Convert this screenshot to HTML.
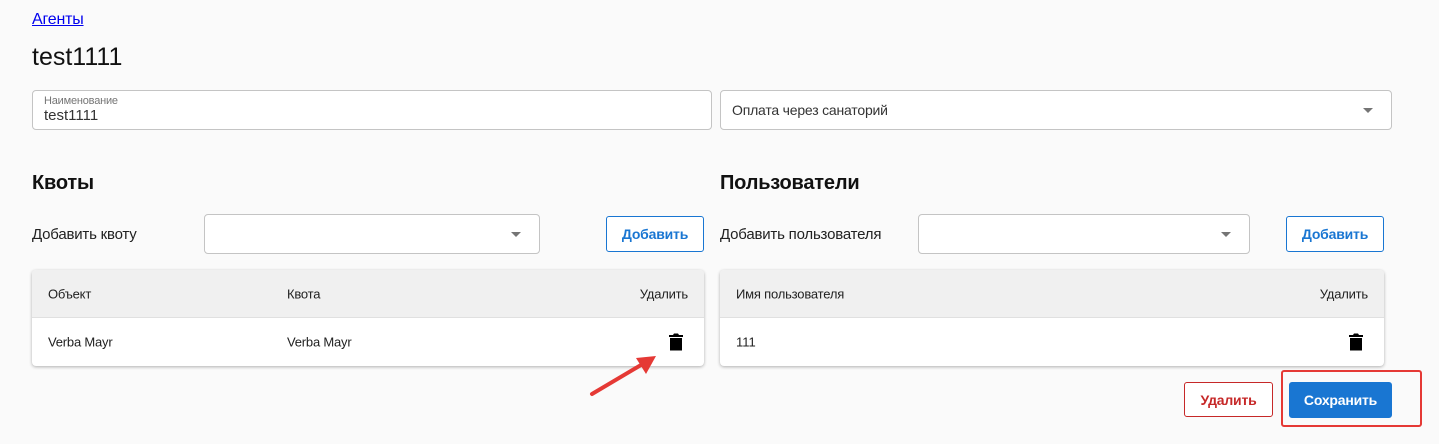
<!DOCTYPE html>
<html><head><meta charset="utf-8"><style>
*{box-sizing:border-box;margin:0;padding:0}
body{width:1439px;height:444px;background:#fafafa;font-family:"Liberation Sans",sans-serif;color:#212121;position:relative;overflow:hidden}
.a{position:absolute}
.n{letter-spacing:-0.2px}
.box{position:absolute;border:1px solid #c4c4c4;border-radius:4px;background:#fff}
.arrow{position:absolute;width:0;height:0;border-left:5px solid transparent;border-right:5px solid transparent;border-top:5px solid #757575}
.btn{position:absolute;border:1px solid #1976d2;border-radius:3px;color:#1976d2;font-size:14px;font-weight:bold;display:flex;align-items:center;justify-content:center;background:#fff}
.tbl{position:absolute;background:#fff;border-radius:4px;box-shadow:0 1px 3px rgba(0,0,0,.3);overflow:hidden}
.th{height:48px;background:#f0f0f0;border-bottom:1px solid #e0e0e0;position:relative}
.tr{height:48px;position:relative}
.c{position:absolute;font-size:13px;top:50%;transform:translateY(-50%)}
</style></head><body>
<a class="a n" style="left:32px;top:11px;font-size:16px;color:#0000ee;text-decoration:underline">Агенты</a>
<div class="a" style="left:32px;top:43px;font-size:25px;color:#111">test1111</div>
<div class="box" style="left:32px;top:90px;width:680px;height:40px">
<div class="a n" style="left:11px;top:4px;font-size:11px;color:#757575">Наименование</div>
<div class="a" style="left:11px;top:16px;font-size:15px;color:#333">test1111</div></div>
<div class="box" style="left:720px;top:90px;width:672px;height:40px">
<div class="a n" style="left:11px;top:11px;font-size:14px;color:#333">Оплата через санаторий</div>
<div class="arrow" style="left:642px;top:17px"></div></div>
<div class="a n" style="left:32px;top:172px;font-size:20px;font-weight:bold;color:#111">Квоты</div>
<div class="a n" style="left:720px;top:172px;font-size:20px;font-weight:bold;color:#111">Пользователи</div>
<div class="a n" style="left:32px;top:226px;font-size:15px">Добавить квоту</div>
<div class="box" style="left:204px;top:214px;width:336px;height:40px"><div class="arrow" style="left:306px;top:17px"></div></div>
<div class="btn n" style="left:606px;top:216px;width:98px;height:36px">Добавить</div>
<div class="a n" style="left:720px;top:226px;font-size:15px">Добавить пользователя</div>
<div class="box" style="left:918px;top:214px;width:332px;height:40px"><div class="arrow" style="left:302px;top:17px"></div></div>
<div class="btn n" style="left:1286px;top:216px;width:98px;height:36px">Добавить</div>

<div class="tbl" style="left:32px;top:270px;width:672px;height:96px">
<div class="th"><span class="c n" style="left:16px">Объект</span><span class="c n" style="left:255px">Квота</span><span class="c n" style="right:16px">Удалить</span></div>
<div class="tr"><span class="c n" style="left:16px">Verba Mayr</span><span class="c n" style="left:255px">Verba Mayr</span>
<svg class="a" style="left:637px;top:15px" width="14" height="18" viewBox="0 0 14 18"><path d="M0 2h4l1-1.5h4l1 1.5h4v2H0z M1 5h12v12.5H1z" fill="#000"/></svg></div></div>

<div class="tbl" style="left:720px;top:270px;width:664px;height:96px">
<div class="th"><span class="c n" style="left:16px">Имя пользователя</span><span class="c n" style="right:16px">Удалить</span></div>
<div class="tr"><span class="c" style="left:16px">111</span>
<svg class="a" style="left:629px;top:15px" width="14" height="18" viewBox="0 0 14 18"><path d="M0 2h4l1-1.5h4l1 1.5h4v2H0z M1 5h12v12.5H1z" fill="#000"/></svg></div></div>

<svg class="a" style="left:580px;top:350px" width="90" height="55"><line x1="12" y1="44" x2="66" y2="12" stroke="#e53935" stroke-width="4" stroke-linecap="round"/><polygon points="76,6 56,8 66,24" fill="#e53935"/></svg>

<div class="btn n" style="left:1184px;top:382px;width:89px;height:35px;border-color:#c62828;color:#c62828;font-weight:bold">Удалить</div>
<div class="a" style="left:1281px;top:370px;width:141px;height:57px;border:2px solid #e53935;border-radius:3px"></div>
<div class="btn n" style="left:1289px;top:382px;width:103px;height:36px;background:#1976d2;color:#fff">Сохранить</div>
</body></html>
